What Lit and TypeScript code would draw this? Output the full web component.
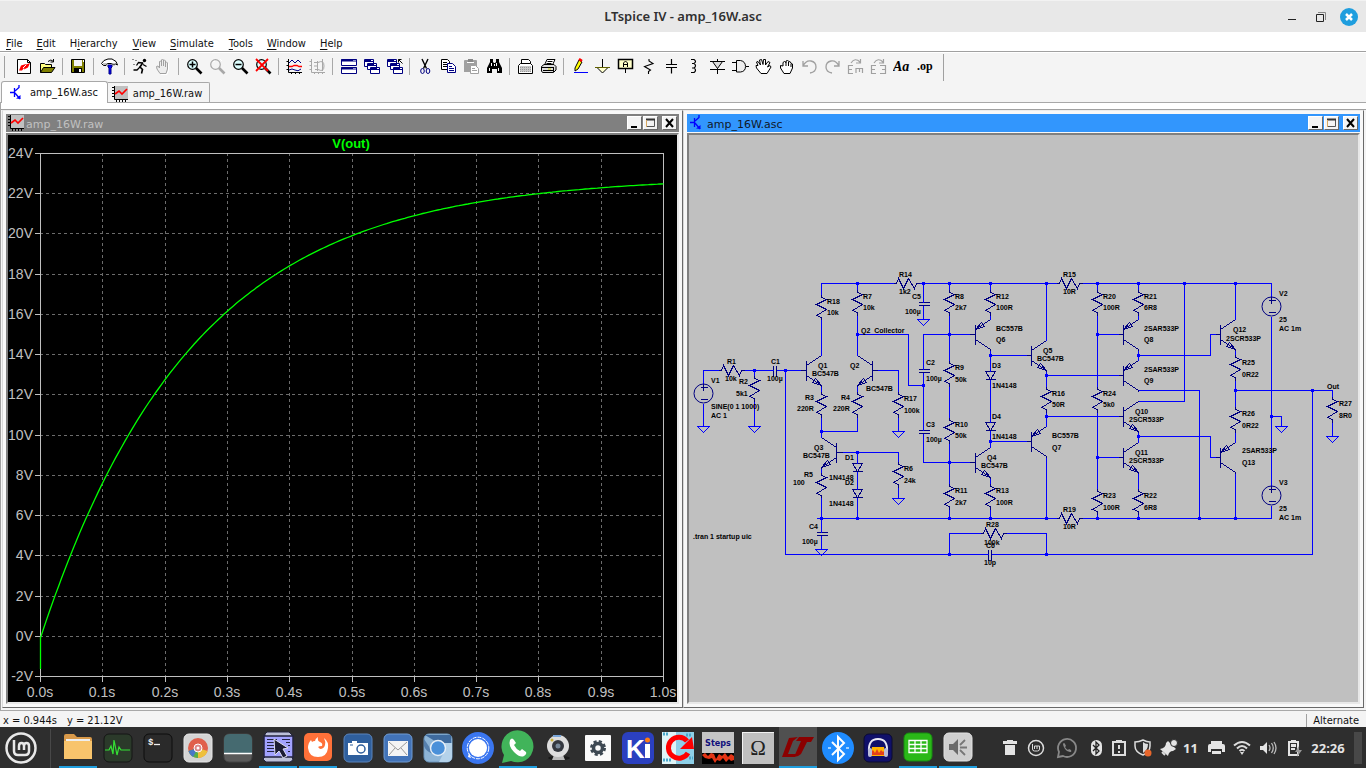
import { LitElement, html, svg, css } from "lit";
import { customElement, state } from "lit/decorators.js";
import { classMap } from "lit/directives/class-map.js";

type Pt = [number, number];

/* ---------- toolbar glyphs, 17 x 17 grid ---------- */
const magnifier = (c: string, glass: string) => svg`
  <circle cx="6.5" cy="6.5" r="4.8" fill=${glass} stroke=${c} stroke-width="1.2"/>
  <path d="M10 10L15.5 15.5" stroke=${c} stroke-width="2.6"/>`;

const windows = svg`
  <path d="M1.5 1.5h9v7h-9z" fill="#fff" stroke="#000080"/><path d="M1 3h10" stroke="#000080" stroke-width="2"/><path d="M8 2.5h2" stroke="#fff"/>
  <path d="M4.5 5.500h9v6h-9z" fill="#fff" stroke="#000080"/><path d="M4 7h10" stroke="#000080" stroke-width="2"/><path d="M11 6.5h2" stroke="#fff"/>
  <path d="M7.5 9.5h9v6h-9z" fill="#fff" stroke="#000080"/><path d="M7 11h10" stroke="#000080" stroke-width="2"/><path d="M14 10.5h2" stroke="#fff"/>`;

const hand = "M5 15.5L2 11L1.5 8.5L3 8L4.5 10V3.5L5.5 3L6.5 4V8V2L7.5 1L8.5 2V8V2.5L9.5 2L10.5 3V9V4.5L11.5 4L12.5 5V11L11 15.5z";

const tools: Record<string, unknown> = {
  new: svg`<path d="M1.5 1.5h10l3 3v11h-13z" fill="#fff" stroke="#000"/><path d="M11.5 1.5v3h3" fill="none" stroke="#000"/>
    <path d="M3 12.5L5 7.5L10 6L8.5 9.5L6 12.5zM9 7L14 5L12 9.5L8 11.5z" fill="#f00"/><path d="M7 10L10 7" stroke="#fff"/>`,
  open: svg`<path d="M1.5 14.500v-9h4l1 1h6v3" fill="#ffff80" stroke="#000"/><path d="M1.5 14.5L4.5 9.5H16L12.5 14.5z" fill="#808000" stroke="#000"/>
    <path d="M9 3.500q3-3 5.500 0M14.5 1v3h-3" fill="none" stroke="#000"/>`,
  save: svg`<path d="M1.5 1.5h13v13h-13z" fill="#808000" stroke="#000"/><path d="M4 2h8v6H4z" fill="#f4f4f4"/><path d="M4 10h8v5H4z" fill="#000"/><path d="M9 11h2v3H9z" fill="#fff"/><path d="M13 2h1v2h-1z" fill="#fff"/>`,
  hammer: svg`<path d="M.5 5.5L3 2.5L7 1H11L15 3.5L16.5 7L14.5 6L13 7L10.5 5.5H6.5L5 7.5H2.5z" fill="#fff" stroke="#000"/><path d="M2 6h4M12 6h3" stroke="#808080"/>
    <path d="M7 7h4v2l-1 1v6H8v-6L7 9z" fill="#00f" stroke="#000080"/>`,
  run: svg`<circle cx="12.5" cy="2.5" r="1.7"/><path d="M11 4.5L8 9L10.5 11.5L9.5 15.5" fill="none" stroke="#000" stroke-width="1.600"/><path d="M10.5 5L6.5 4.5L4.5 7.5M11 6.5L14.5 8.5M8 9L5 12L1.5 12" fill="none" stroke="#000" stroke-width="1.3"/>
    <path d="M0 1.500h2M3 2.500h2M1 6.500h2" stroke="#888"/>`,
  halt: svg`<path d=${hand} transform="translate(1 1)" fill="none" stroke="#fff"/><path d=${hand} fill="#ededed" stroke="#a0a0a0"/>`,
  zoomin: svg`${magnifier("#000", "#dff")}<path d="M3.500 6.500h6M6.500 3.500v6" stroke="#000" stroke-width="1.500"/>`,
  pan: svg`${magnifier("#a8a8a8", "#f4f4f4")}<path d="M4 4l2-1M11 1l2 2" stroke="#fff"/>`,
  zoomout: svg`${magnifier("#000", "#dff")}<path d="M3.500 6.500h6" stroke="#000" stroke-width="1.500"/>`,
  fit: svg`${magnifier("#000", "#dff")}<path d="M1 1L13 13M13 1L1 13" stroke="#f00" stroke-width="1.800"/>`,
  plot: svg`<path d="M2.500 1v13.500H16M.5 3.500h2M.5 7.500h2M.5 11.500h2M5.500 14v2M9.500 14v2M13.500 14v2" fill="none" stroke="#000"/>
    <path d="M3 5L6 2L9 5L12 2L15 5" fill="none" stroke="#000080"/><path d="M3 8.500h3l2-1h3l2 1h3" fill="none" stroke="#f00" stroke-width="1.300"/><path d="M3 12q3-2 6 0t6-1" fill="none" stroke="#000080"/>`,
  spice: svg`<path d="M2.500 1v13.500H16M.5 3.500h2M.5 7.500h2M.5 11.500h2M5.500 14v2M9.500 14v2M13.500 14v2" fill="none" stroke="#a8a8a8"/><path d="M5 4.500h4q6-3 6 3.500t-6 3.500H6M5 8h3M8.500 3v10M13.500 1v12" fill="none" stroke="#a8a8a8"/>`,
  tile: svg`<path d="M1.500 1.500h15v6h-15zM1.500 9.500h15v6h-15z" fill="#fff" stroke="#000080"/><path d="M1 2.500h16M1 10.500h16" stroke="#000080" stroke-width="2"/><path d="M13 2.500h3M13 10.500h3" stroke="#9090d0"/>`,
  cascade: windows,
  closeall: svg`${windows}<path d="M12.500 1.500l4 4M12.500 4.500v-3h3" fill="none" stroke="#000"/>`,
  cut: svg`<path d="M5 1L9.500 10.500M11 1L6.500 10.500" stroke="#000" stroke-width="1.400"/><ellipse cx="5.500" cy="13" rx="1.800" ry="2.500" fill="none" stroke="#000080"/><ellipse cx="11" cy="13" rx="1.800" ry="2.500" fill="none" stroke="#000080"/>`,
  copy: svg`<path d="M1.500 1.500h6l2 2v8h-8z" fill="#fff" stroke="#000"/><path d="M3 4.500h4M3 6.500h4M3 8.500h4" stroke="#000"/><path d="M7.500 5.500h5l3 3v6h-8z" fill="#fff" stroke="#000080"/><path d="M9 8.500h3M9 10.500h5M9 12.500h5" stroke="#000080"/>`,
  paste: svg`<path d="M1 3q0-1 1-1h11q1 0 1 1v11H1z" fill="#a0a0a0"/><path d="M5 1h5v3H5z" fill="#888"/><path d="M4 4.500h7" stroke="#fff"/><path d="M7.500 7.500h5l3 3v5h-8z" fill="#fff" stroke="#a0a0a0"/><path d="M9 10.500h3M9 12.500h5" stroke="#a0a0a0"/>`,
  find: svg`<path d="M4 1h3v3l1 1h1l1-1V1h3v3l3 6v5h-5v-4H6v4H1v-5l3-6z"/><path d="M5.500 5v3M3.500 10v3M10.500 5v3M12.500 10v3M8.500 6v2" stroke="#fff"/>`,
  setup: svg`<path d="M4.500 6.500v-5h7l2 2v3" fill="#fff" stroke="#000"/><path d="M1.500 7.500l2-2h10l2 2v8h-14z" fill="#fff" stroke="#000"/><path d="M3 8h11v6H3z" fill="#c8c8c8"/><path d="M3 9.500h11M3 11.500h11M3 13.500h11" stroke="#999" stroke-dasharray="1 1"/>`,
  print: svg`<path d="M4.500 7L7 1.500h8L12.500 7z" fill="#fff" stroke="#000"/><path d="M7.500 3.500h5M6.500 5.500h5" stroke="#000"/><path d="M1.500 8.500L4 6.500h10l2 2V12L13.500 14.500H2.500L1.500 13z" fill="#ddd" stroke="#000"/><path d="M2 9.500h11M3 12.500h10M13.500 9v5" stroke="#000"/><path d="M8 11h3" stroke="#cc0"/>`,
  wire: svg`<path d="M4 10L8 2L11 4L7 11L4 13z" fill="#ff0" stroke="#000"/><path d="M8 1l3 2" stroke="#f00" stroke-width="2.500"/><path d="M3 14.500h14" stroke="#00f"/>`,
  ground: svg`<path d="M8.500 1v8" stroke="#000"/><path d="M3 9.500h11L8.500 15z" fill="#ffffd0" stroke="#000"/><path d="M1 9.500h15" stroke="#606000"/>`,
  label: svg`<path d="M1.500 1.500h14v9h-14z" fill="#ffffc8" stroke="#000" stroke-width="1.500"/><path d="M6.500 9V5l2-2l2 2v4M6.500 6.500h4" fill="none" stroke="#000"/><path d="M8.500 11v4" stroke="#000"/>`,
  res: svg`<path d="M9 1v2L13 5.500L4.500 8.500L10.500 12L8.500 13.500V16" fill="none" stroke="#000" stroke-width="1.100"/>`,
  cap: svg`<path d="M8.500 1v5.500M8.500 9.500v6M3 6.500h11M3 9.500h11" stroke="#000" stroke-width="1.200"/>`,
  ind: svg`<path d="M5 1.500h3q3 2 0 4H6h2q3 2 0 4.500H6h2q3 2 0 4.500H5" fill="none" stroke="#000" stroke-width="1.200"/>`,
  dio: svg`<path d="M8.500 1v15M1 3.500h15M1 11.500h15" stroke="#000"/><path d="M3.500 3.500L8.500 10.500L13.500 3.500z" fill="#ddd" stroke="#000"/>`,
  gate: svg`<path d="M4.500 2.500h4q5 1 5 6t-5 5.500h-4z" fill="#eee" stroke="#000"/><path d="M0 4.500h4M0 12.500h4M14 8.500h3" stroke="#000"/>`,
  move: svg`<path d="M6 15.500L1.500 10L1 7.500H3L1.500 4L3 3.500L5.500 7L4.500 2L6.500 1.500L8 6.500L8.500 1.500L10.500 1.500L10.500 7L13 3.500L15 4.500L12.500 9L15 7.500L16 9L12 15.500z" fill="#fff" stroke="#000"/>`,
  drag: svg`<path d="M6 15.500L2.500 10V7.500L5 8V4.500L6.500 3.500L8 4.500V3L9.500 2.500L11 3.500L12.500 4L13 5.500L14.500 6V10L12 15.500z" fill="#fff" stroke="#000"/><path d="M8 4v4M10.500 4v4M13 6v3" stroke="#000"/>`,
  undo: svg`<path d="M2 3v5h5M2 8q3-6 8-5t5 6t-6 6" fill="none" stroke="#a0a0a0" stroke-width="1.300"/>`,
  redo: svg`<path d="M15 3v5h-5M15 8q-3-6-8-5t-5 6t6 6" fill="none" stroke="#a0a0a0" stroke-width="1.300"/>`,
  rotate: svg`<path d="M4 5q4-6 9-1M13.500 1v4H9M6 7.500H1.500v8H6M2 11.500h3M9 10v5M9 10.500h7M12.500 10v4M15.500 10v5" fill="none" stroke="#a0a0a0" stroke-width="1.200"/>`,
  mirror: svg`<path d="M4 5q4-6 9-1M13.500 1v4H9M6 7.500H1.500v8H6M2 11.500h3M10 7.500h5.500v8H10M12 11.500h3" fill="none" stroke="#a0a0a0" stroke-width="1.200"/>`,
};

const toolGroups: string[][] = [
  ["new", "open"], ["save"], ["hammer"], ["run", "halt"],
  ["zoomin", "pan", "zoomout", "fit"], ["plot", "spice"],
  ["tile", "cascade", "closeall"], ["cut", "copy", "paste", "find"],
  ["setup", "print"],
  ["wire", "ground", "label", "res", "cap", "ind", "dio", "gate", "move", "drag", "undo", "redo", "rotate", "mirror", "text", "op"],
];

const transistorIcon = html`<svg class="doc" viewBox="0 0 16 16"><path d="M1 7.500h4M5.500 3v9M6 6L10 2.500V0M6 8L11 14" fill="none" stroke="#00f" stroke-width="1.300"/><path d="M7 13.500l4.500.5V10z" fill="#00f"/></svg>`;
const waveIcon = html`<svg class="doc" viewBox="0 0 16 16"><path d="M3 0h13v13H3z" fill="#c0c0c0"/><path d="M2.500 0v13.500H16M0 1.500h2M0 4.500h2M0 7.500h2M0 10.500h2M4.500 14v2M7.500 14v2M10.500 14v2M13.500 14v2" fill="none" stroke="#000"/><path d="M3 8L7 5L10 8L15 3" fill="none" stroke="#f00" stroke-width="1.700"/></svg>`;

/* ---------- panel icons, 40 x 41 grid ---------- */
const tile = (fill: string, stroke = "#1c1c1c") =>
  svg`<rect x="6" y="6" width="28" height="28" rx="5" fill=${fill} stroke=${stroke}/>`;

interface App { name: string; open?: boolean; active?: boolean; art: unknown }
const apps: App[] = [
  { name: "Files", open: true, art: svg`<path d="M6 9q0-2 2-2h8l3 3h13q2 0 2 2v4H6z" fill="#d99a4a"/><path d="M8 12h24v6H8z" fill="#eee"/><path d="M6 14h28v18H6z" fill="#f8c46c"/>` },
  { name: "System monitor", art: svg`${tile("#2b3a2a", "#151515")}<path d="M7 22h4l2-4l2 8l1-14l3 15l2-8l2 3h9" fill="none" stroke="#35e035" stroke-width="1.200"/>` },
  { name: "Terminal", art: svg`${tile("#2a2a2a", "#0c0c0c")}<text x="10" y="17" class="mono">$</text><path d="M16 16.500h6" stroke="#eee" stroke-width="1.300"/>` },
  { name: "Disk usage", art: svg`${tile("#d4d4d4", "#e8e8e8")}<circle cx="20" cy="20" r="10" fill="#e0604c"/><path d="M20 20L10.500 23A10 10 0 0 0 20 30z" fill="#58b04a"/><path d="M20 20V30A10 10 0 0 0 29.500 23z" fill="#eec03c"/><path d="M20 20L10.500 23A10 10 0 0 0 15 29z" fill="#4a78c8"/><circle cx="20" cy="20" r="4" fill="#d88" stroke="#fff"/><circle cx="20" cy="20" r="1.500" fill="#fff"/>` },
  { name: "Screenshot strip", art: svg`${tile("#5a5a5a", "#444")}<path d="M6 12q0-6 6-6h16q6 0 6 6v13H6z" fill="#456a70"/><path d="M6 25.500h28" stroke="#fff" stroke-width="1.500"/>` },
  { name: "Screen notes", open: true, art: svg`<path d="M7 9V7l2-2h22l3 3v22l1 3l-3 2H8l-3-3l2-2z" fill="#bcc0d8" stroke="#23233f"/><path d="M6 9h29v21H6z" fill="#a2a2ff" stroke="#23233f" stroke-width="1.500"/><path d="M9 12.500h10M9 15.500h7M9 18.500h8M9 21.500h7M9 24.500h8M24 12.500h8M28 15.500h4M30 18.500h2M30 24.500h2" stroke="#23233f"/><path d="M16 12l14 9l-5 1l4 7l-4 2l-4-7l-4 4z" fill="#1c1c34" stroke="#dde"/>` },
  { name: "Firefox", open: true, art: svg`<rect x="6" y="6" width="28" height="28" rx="5" fill="#ff7139"/><path d="M20 30q-9 0-10-9q0-5 3-8l1 2q1-1 3-1q0-2 3-4q-1 4 2 5q3 1 2 4q-3 0-4 1l2 2q4 0 5-4q1-3-1-7q5 4 4 10q-1 9-10 9z" fill="#fff"/>` },
  { name: "Camera", art: svg`${tile("#2f5f9d", "#5b84bb")}<path d="M10 15h4v-2h5v2h11v12H10z" fill="#fff"/><circle cx="23" cy="21" r="4" fill="#fff" stroke="#2f5f9d" stroke-width="1.500"/><path d="M12 17h3" stroke="#2f5f9d"/>` },
  { name: "Mail", art: svg`${tile("#4273b8", "#6f9bd2")}<path d="M10 13h20v15H10z" fill="#f4f4f4"/><path d="M11 14l9 8l9-8M11 27l6-7M29 27l-6-7" fill="none" stroke="#999"/>` },
  { name: "Chromium", art: svg`${tile("#8db4d6", "#6c97bf")}<path d="M6 11l10 15q-8-2-10-8z" fill="#5680ae"/><path d="M7 7h26v8H20z" fill="#3f6b9e"/><path d="M26 24l-5 10h9q4-1 4-5V15h-8z" fill="#b4d2ea"/><circle cx="20" cy="20" r="7.500" fill="#4a90d9" stroke="#e6eef6" stroke-width="1.500"/>` },
  { name: "Signal", art: svg`<circle cx="20" cy="20" r="16" fill="#3a76f0"/><circle cx="20" cy="20" r="9" fill="#fff"/><path d="M13 30l-3-1l1-4z" fill="#fff"/><circle cx="20" cy="20" r="10.800" fill="none" stroke="#fff" stroke-dasharray="4 1"/>` },
  { name: "WhatsApp", open: true, art: svg`<path d="M4 36L6 28A16 16 0 1 1 13 34z" fill="#41b45a"/><path d="M12 13q2-3 4 0l2 3l-2 2q2 4 6 6l2-2l4 3q1 2-2 4q-4 2-10-4t-4-12z" fill="#fff"/>` },
  { name: "Webcam", art: svg`<ellipse cx="21" cy="30" rx="11" ry="2" fill="#1a1a1a"/><path d="M16 27h9l2 5H14z" fill="#bbb"/><circle cx="20" cy="18" r="11" fill="#dedede"/><path d="M15 7h8v2h-8z" fill="#7aa6d8"/><circle cx="20" cy="18" r="6" fill="#34383f"/><circle cx="20" cy="18" r="2.500" fill="#789"/><circle cx="14" cy="12" r="1.500" fill="#c9b23c"/>` },
  { name: "Settings", art: svg`<rect x="7" y="7" width="26" height="26" rx="1" fill="#fafafa"/><circle cx="20" cy="20" r="6.500" fill="none" stroke="#3d4852" stroke-width="3" stroke-dasharray="3 2.100"/><circle cx="20" cy="20" r="4.500" fill="none" stroke="#3d4852" stroke-width="3.500"/>` },
  { name: "KiCad", art: svg`<rect x="4" y="4" width="32" height="32" rx="6" fill="#2b40c0"/><text x="8" y="30" class="ki">K</text><path d="M27 16h5v14h-5z" fill="#fff"/><circle cx="29.500" cy="12" r="2.500" fill="#ff7a10"/>` },
  { name: "Cirkuit", art: svg`<path d="M4 4h32v32H4z" fill="#dff4f7"/><path d="M18 4h18v32H18z" fill="#8ed0e8"/><path d="M5 6h6M5 32h8M28 7h6M31 30h4" stroke="#4aa8cc" stroke-width="3" stroke-dasharray="2 1"/><path d="M29 13a10.500 10.500 0 1 0 1 12" fill="none" stroke="#f00" stroke-width="5"/><path d="M22 21h14l-2-12z" fill="#f00"/>` },
  { name: "Steps", art: svg`<path d="M4 4h32v32H4z" fill="#c4c4c4"/><path d="M4 25h32v11H4z" fill="#000"/><path d="M4 27l3-2l3 3l3-3l3 1l2 5l3-5l3 2l3-3l3 4l3-3l3 2v4l-3 1l-2-2l-3 3l-3-4l-3 3l-3-1l-2 3l-3-5l-3 1l-4-1z" fill="#e33415"/><text x="20" y="18" text-anchor="middle" class="steps">Steps</text>` },
  { name: "Resistance", art: svg`<path d="M4 4h32v32H4z" fill="#f2f2f2"/><path d="M5 5h31v31H5z" fill="#c0c0c0"/><text x="20" y="27" text-anchor="middle" class="ohm">Ω</text>` },
  { name: "LTspice", open: true, active: true, art: svg`<path d="M4 30L11 11L20 10L15 14L10 27H19L17 30zM21 10H36L33 15H29L23 27Q20 30 16 30L23 14H18z" fill="#8b0000"/>` },
  { name: "Bluetooth", art: svg`<circle cx="20" cy="20" r="16" fill="#1f8cff"/><path d="M14 14l12 12l-6 6V9l6 6L14 27" fill="none" stroke="#fff" stroke-width="2"/><path d="M10 20h3M28 20h3" stroke="#9fd0ff" stroke-width="2"/>` },
  { name: "Audacity", art: svg`${tile("#10106a", "#0a0a30")}<path d="M14 19h12l1 9H13z" fill="#ffb400"/><path d="M13 24l2-2l2 3l2-4l2 4l2-3l2 2l2-2v5H13z" fill="#e3401a"/><path d="M11 24q-1-13 9-13t9 13" fill="none" stroke="#e8e8f4" stroke-width="2"/><rect x="10" y="20" width="4" height="9" rx="2" fill="#b9bdd8"/><rect x="26" y="20" width="4" height="9" rx="2" fill="#b9bdd8"/>` },
  { name: "Spreadsheet", open: true, art: svg`${tile("#2ab818", "#178a10")}<path d="M11 13.500h18v12H11zM11 17.500h18M11 21.500h18M17 13v13M23 13v13" fill="none" stroke="#fff" stroke-width="1.300"/>` },
  { name: "Volume control", open: true, art: svg`${tile("#cfcfcf", "#e2e2e2")}<path d="M11 17h4l5-5v16l-5-5h-4z" fill="#6a6a6a"/><path d="M22 18l5-5M22 20.500h7M22 23l5 5" stroke="#777" stroke-width="1.800"/>` },
];

const trayLeft: { name: string; cls: string; art: unknown }[] = [
  { name: "Trash", cls: "", art: svg`<path d="M5 5h14v3H5zM9 4h6v2H9zM7 9h10v10H7z" fill="#e4e4e4"/>` },
  { name: "Update manager", cls: "", art: svg`<circle cx="12" cy="12" r="7.500" fill="none" stroke="#ddd" stroke-width="1.500"/><path d="M8.500 8v5q0 2 2 2h3q2 0 2-2v-3h-5v3M13 10v3" fill="none" stroke="#ddd"/>` },
  { name: "WhatsApp", cls: "wide", art: svg`<path d="M3 21l1-5A9 9 0 1 1 8 20z" fill="none" stroke="#888" stroke-width="1.800"/><path d="M8 8q1-2 2 0l1 2l-1 1q1 2 3 3l1-1l2 1q1 2-1 2q-3 0-5-3t-2-5z" fill="#888"/>` },
  { name: "Bluetooth", cls: "slim", art: svg`<rect x="6" y="4" width="11" height="16" rx="5.500" fill="#e4e4e4"/><path d="M8 9l6 6l-3 3V6l3 3l-6 6" fill="none" stroke="#222" stroke-width="1.300"/>` },
  { name: "Clipboard", cls: "tight", art: svg`<path d="M6 6h12v13H6z" fill="none" stroke="#ddd" stroke-width="2"/><path d="M9 4h6v3H9z" fill="#ddd"/><path d="M12 9v4M12 15v2" stroke="#ddd" stroke-width="2"/>` },
  { name: "Shield", cls: "tight", art: svg`<path d="M4 6q4 0 8-2q4 2 7 2v4q0 6-7 9q-8-3-8-9z" fill="none" stroke="#ddd" stroke-width="1.500"/><path d="M12 6v11q5-3 5-9q-3 0-5-2z" fill="#ddd"/><circle cx="17" cy="17" r="3.500" fill="#e8672c"/>` },
  { name: "Notifications", cls: "", art: svg`<path d="M4 13Q10 12 10 7L12 5L20 13L17 15Q13 15 12 20z" fill="#e4e4e4"/><circle cx="18" cy="7" r="3.500" fill="#e4e4e4" stroke="#2e2e2e"/><path d="M6 16l3 3" stroke="#ddd" stroke-width="2"/>` },
];
const trayRight: { name: string; art: unknown }[] = [
  { name: "Printer", art: svg`<path d="M7 5h11v3H7zM4 10q0-2 2-2h13q2 0 2 2v6h-3v-3H7v3H4z" fill="#e4e4e4"/><path d="M8 15h9v3H8z" fill="#e4e4e4"/>` },
  { name: "Wireless", art: svg`<path d="M4 9.500q8-7 16 0M7 12.500q5-5 10 0M9.500 15q2.500-2.500 5 0" fill="none" stroke="#ddd" stroke-width="2"/><path d="M10 16h4l-2 3z" fill="#ddd"/>` },
  { name: "Volume", art: svg`<path d="M4 10h3l4-4v12l-4-4H4z" fill="#e4e4e4"/><path d="M13 9q2 3 0 6M15.500 7q3.500 5 0 10M18 6q4 6 0 12" fill="none" stroke="#bbb" stroke-width="1.300"/>` },
  { name: "Battery", art: svg`<path d="M7 6h9v13H7z" fill="none" stroke="#e4e4e4" stroke-width="2"/><path d="M9 4h5v2H9zM9 8h5v3H9zM9 12h4v2H9z" fill="#e4e4e4"/><path d="M17 10l-4 6h3l-1 5l5-7h-3z" fill="#999"/>` },
];

/* ---------- schematic ---------- */
const UNIT = 0.3205;
const stroke = (x: number, y: number, pts: Pt[]) =>
  "M" + pts.map(([px, py]) => `${x + Math.round(px * UNIT) + 0.5} ${y + Math.round(py * UNIT) + 0.5}`).join("L");
const poly = (pts: Pt[]) => "M" + pts.map(([px, py]) => `${px + 0.5} ${py + 0.5}`).join("L");

const ZIGZAG: Pt[] = [[0, 0], [0, 8], [16, 16], [-16, 32], [16, 48], [-16, 64], [0, 72], [0, 80]];
const resistor = ([x, y]: Pt) => stroke(x, y, ZIGZAG);
const resistorH = ([x, y]: Pt) => stroke(x, y, ZIGZAG.map(([a, b]) => [b, -a] as Pt));

const transistor = (x: number, y: number, side: 1 | -1, pnp: boolean) => {
  const f = pnp ? -1 : 1;
  const at = (pts: Pt[]) => stroke(x, y, pts.map(([a, b]) => [a * side, b * f] as Pt));
  const arrow: Pt[] = pnp
    ? [[-48, 16], [-28, 36], [-20, 24], [-48, 16]]
    : [[0, 48], [-28, 38], [-20, 26], [0, 48]];
  return at([[-64, 0], [-48, 0]]) + at([[-48, -32], [-48, 32]]) +
    at([[0, -50], [0, -48], [-48, -16]]) + at([[-48, 16], [0, 48], [0, 50]]) + at(arrow);
};
const diode = ([x, y]: Pt) =>
  stroke(x, y, [[-17, 0], [17, 0], [0, 24], [-17, 0]]) + stroke(x, y, [[-17, 25], [17, 25]]);
const capV = ([x, y]: Pt) => poly([[x - 5, y], [x + 6, y]]) + poly([[x - 5, y + 3], [x + 6, y + 3]]);
const capH = ([x, y]: Pt) => poly([[x, y - 5], [x, y + 6]]) + poly([[x + 3, y - 5], [x + 3, y + 6]]);
const source = ([x, y]: Pt) =>
  poly([[x - 3, y - 6], [x + 4, y - 6]]) + poly([[x, y - 10], [x, y - 3]]) + poly([[x - 3, y + 6], [x + 4, y + 6]]);
const earth = ([x, y]: Pt) => poly([[x - 6, y], [x + 6, y], [x, y + 6], [x - 6, y]]);

const resistors: Pt[] = [
  [821, 294], [857, 289], [949, 289], [990, 289], [1097, 289], [1138, 289], [949, 360], [949, 417],
  [1046, 386], [1097, 386], [949, 483], [990, 483], [1097, 488], [1138, 488], [1235, 354], [1235, 406],
  [1332, 396], [898, 391], [821, 391], [857, 391], [754, 375], [898, 461], [821, 472],
];
const resistorsH: Pt[] = [[893, 283], [1056, 283], [1056, 518], [980, 533], [718, 370]];
const transistors: [number, number, 1 | -1, boolean][] = [
  [821, 370, 1, false], [857, 370, -1, false], [821, 452, -1, false], [990, 462, 1, false],
  [1046, 355, 1, false], [990, 334, 1, true], [1046, 441, 1, true], [1138, 334, 1, true],
  [1138, 375, 1, true], [1138, 416, 1, false], [1138, 457, 1, false], [1235, 334, 1, false],
  [1235, 457, 1, true],
];
const sources: Pt[] = [[703, 393], [1271, 306], [1271, 495]];
const earths: Pt[] = [[703, 426], [754, 426], [898, 431], [898, 498], [821, 549], [923, 319], [1281, 426], [1332, 436]];

const symbolPath =
  resistors.map(resistor).join("") + resistorsH.map(resistorH).join("") +
  transistors.map((t) => transistor(...t)).join("") + sources.map(source).join("") +
  ([[857, 463], [857, 489], [990, 371], [990, 422]] as Pt[]).map(diode).join("") +
  ([[821, 532], [923, 302], [923, 369], [923, 430]] as Pt[]).map(capV).join("") +
  ([[773, 370], [988, 554]] as Pt[]).map(capH).join("");

const wires: Pt[][] = [
  [[703, 383], [703, 370], [718, 370]], [[703, 403], [703, 426]], [[744, 370], [773, 370]], [[776, 370], [800, 370]],
  [[754, 370], [754, 375]], [[754, 401], [754, 426]],
  [[785, 370], [785, 554], [988, 554]], [[991, 554], [1312, 554], [1312, 390]],
  [[893, 283], [821, 283], [821, 294]], [[821, 319], [821, 355]], [[821, 386], [821, 391]], [[821, 417], [821, 437]],
  [[857, 283], [857, 289]], [[857, 315], [857, 355]], [[857, 386], [857, 391]], [[857, 417], [857, 431], [821, 431]],
  [[857, 334], [908, 334], [908, 385], [923, 385]], [[877, 370], [898, 370], [898, 391]], [[898, 417], [898, 431]],
  [[821, 468], [821, 472]], [[821, 497], [821, 532]], [[821, 535], [821, 549]],
  [[842, 452], [898, 452], [898, 461]], [[898, 487], [898, 498]],
  [[857, 452], [857, 463]], [[857, 471], [857, 489]], [[857, 497], [857, 518]],
  [[816, 518], [1056, 518]], [[1082, 518], [1271, 518], [1271, 505]],
  [[919, 283], [1056, 283]], [[1082, 283], [1271, 283], [1271, 296]], [[1271, 316], [1271, 485]],
  [[923, 283], [923, 302]], [[923, 305], [923, 319]],
  [[969, 334], [923, 334], [923, 369]], [[923, 372], [923, 430]], [[923, 433], [923, 462], [969, 462]],
  [[949, 283], [949, 289]], [[949, 315], [949, 360]], [[949, 386], [949, 417]], [[949, 443], [949, 483]], [[949, 509], [949, 518]],
  [[990, 283], [990, 289]], [[990, 315], [990, 319]], [[990, 350], [990, 371]], [[990, 379], [990, 422]], [[990, 430], [990, 447]],
  [[990, 478], [990, 483]], [[990, 509], [990, 518]], [[990, 355], [1026, 355]], [[990, 441], [1026, 441]],
  [[1046, 283], [1046, 340]], [[1046, 371], [1046, 386]], [[1046, 412], [1046, 426]], [[1046, 457], [1046, 518]],
  [[1046, 375], [1118, 375]], [[1046, 416], [1118, 416]],
  [[1097, 283], [1097, 289]], [[1097, 315], [1097, 386]], [[1097, 412], [1097, 488]], [[1097, 514], [1097, 518]],
  [[1097, 334], [1118, 334]], [[1097, 457], [1118, 457]],
  [[1138, 283], [1138, 289]], [[1138, 315], [1138, 319]], [[1138, 350], [1138, 360]], [[1138, 432], [1138, 442]],
  [[1138, 473], [1138, 488]], [[1138, 514], [1138, 518]],
  [[1138, 390], [1199, 390], [1199, 518]], [[1138, 401], [1184, 401], [1184, 283]],
  [[1138, 355], [1210, 355], [1210, 334], [1215, 334]], [[1138, 436], [1210, 436], [1210, 457], [1215, 457]],
  [[1235, 283], [1235, 319]], [[1235, 350], [1235, 354]], [[1235, 380], [1235, 406]], [[1235, 432], [1235, 442]], [[1235, 473], [1235, 518]],
  [[1235, 390], [1332, 390], [1332, 396]], [[1332, 422], [1332, 436]], [[1271, 416], [1281, 416], [1281, 426]],
  [[949, 554], [949, 533], [980, 533]], [[1006, 533], [1046, 533], [1046, 554]],
];
const wirePath = wires.map(poly).join("") + earths.map(earth).join("");

const nodes: Pt[] = [
  [754, 370], [785, 370], [857, 283], [923, 283], [949, 283], [990, 283], [1046, 283], [1097, 283], [1138, 283],
  [1184, 283], [1235, 283], [857, 334], [923, 385], [949, 334], [821, 431], [857, 452], [821, 518], [857, 518],
  [949, 518], [990, 518], [1046, 518], [1097, 518], [1138, 518], [1199, 518], [1235, 518], [949, 462], [990, 355],
  [990, 441], [1046, 375], [1046, 416], [1097, 334], [1097, 457], [1138, 355], [1138, 436], [1235, 390],
  [1312, 390], [1271, 416], [949, 554], [1046, 554],
];

const labels: [number, number, string][] = [
  [827, 304, "R18"], [827, 315, "10k"], [863, 299, "R7"], [863, 310, "10k"], [899, 277, "R14"], [899, 294, "1k2"],
  [912, 299, "C5"], [905, 314, "100µ"], [861, 333, "Q2\u00a0\u00a0Collector"], [727, 364, "R1"], [725, 381, "10k"],
  [771, 364, "C1"], [767, 381, "100µ"], [711, 383, "V1"], [739, 384, "R2"], [736, 396, "5k1"],
  [711, 409, "SINE(0 1 1000)"], [711, 418, "AC 1"], [818, 368, "Q1"], [812, 376, "BC547B"], [850, 368, "Q2"],
  [866, 391, "BC547B"], [805, 400, "R3"], [797, 411, "220R"], [841, 400, "R4"], [833, 411, "220R"],
  [904, 401, "R17"], [904, 413, "100k"], [955, 299, "R8"], [955, 310, "2k7"], [996, 299, "R12"], [996, 310, "100R"],
  [996, 331, "BC557B"], [996, 342, "Q6"], [955, 370, "R9"], [955, 382, "50k"], [926, 365, "C2"], [926, 381, "100µ"],
  [1043, 353, "Q5"], [1037, 361, "BC547B"], [992, 368, "D3"], [992, 388, "1N4148"], [1052, 396, "R16"], [1052, 407, "50R"],
  [1103, 396, "R24"], [1103, 407, "5k0"], [992, 419, "D4"], [992, 439, "1N4148"], [926, 427, "C3"], [926, 442, "100µ"],
  [955, 427, "R10"], [955, 438, "50k"], [1135, 414, "Q10"], [1129, 422, "2SCR533P"], [1063, 277, "R15"], [1063, 294, "10R"],
  [1103, 299, "R20"], [1103, 310, "100R"], [1144, 299, "R21"], [1144, 310, "6R8"], [1144, 331, "2SAR533P"], [1144, 342, "Q8"],
  [1144, 372, "2SAR533P"], [1144, 383, "Q9"], [1233, 332, "Q12"], [1226, 341, "2SCR533P"], [1279, 296, "V2"],
  [1279, 322, "25"], [1279, 331, "AC 1m"], [1242, 365, "R25"], [1242, 377, "0R22"], [1242, 416, "R26"], [1242, 428, "0R22"],
  [1327, 389, "Out"], [1339, 406, "R27"], [1339, 418, "8R0"], [814, 450, "Q3"], [803, 458, "BC547B"], [845, 460, "D1"],
  [829, 480, "1N4148"], [845, 485, "D2"], [829, 506, "1N4148"], [804, 477, "R5"], [793, 485, "100"], [904, 471, "R6"],
  [904, 483, "24k"], [809, 529, "C4"], [802, 544, "100µ"], [693, 539, ".tran 1 startup uic"], [987, 460, "Q4"],
  [981, 468, "BC547B"], [955, 493, "R11"], [955, 505, "2k7"], [996, 493, "R13"], [996, 505, "100R"], [1052, 438, "BC557B"],
  [1052, 450, "Q7"], [1103, 498, "R23"], [1103, 510, "100R"], [1063, 512, "R19"], [1063, 529, "10R"], [986, 527, "R28"],
  [984, 545, "100k"], [986, 548, "C6"], [984, 565, "10p"], [1135, 455, "Q11"], [1129, 463, "2SCR533P"], [1144, 498, "R22"],
  [1144, 510, "6R8"], [1242, 453, "2SAR533P"], [1242, 465, "Q13"], [1279, 485, "V3"], [1279, 511, "25"], [1279, 520, "AC 1m"],
];

/* ---------- waveform ---------- */
const X0 = 40, X1 = 663, Y0 = 153, Y1 = 676;
const volts = Array.from({ length: 14 }, (_, i) => 24 - 2 * i);
const times = Array.from({ length: 11 }, (_, i) => i / 10);
const px = (t: number) => Math.round(X0 + t * (X1 - X0)) + 0.5;
const py = (v: number) => Math.round(Y0 + ((24 - v) / 26) * (Y1 - Y0)) + 0.5;
const trace = `M40.5 669V637L` + Array.from({ length: 208 }, (_, i) => {
  const t = i / 207;
  const v = 22.95 * (1 - Math.exp(-4.1 * t)) - 0.08;
  return `${(X0 + 0.5 + t * (X1 - X0)).toFixed(1)} ${(Y0 + ((24 - v) / 26) * (Y1 - Y0) + 0.5).toFixed(1)}`;
}).join("L");

@customElement("app-root")
export class AppRoot extends LitElement {
  @state() private tab = "amp_16W.asc";

  static styles = css`
    :host { display: flex; flex-direction: column; height: 100vh; background: #f4f4f4; color: #111;
      font: 11px/14px "DejaVu Sans Condensed", "DejaVu Sans", sans-serif; overflow: hidden; }
    * { box-sizing: border-box; }
    button { font: inherit; color: inherit; background: none; border: 0; padding: 0; margin: 0; display: block; }
    svg { display: block; }
    .head { height: 32px; flex: none; display: grid; grid-template-columns: 1fr auto 1fr; align-items: center;
      background: #e8e8e8; border-top: 1px solid #f2f2f2; }
    .head h1 { grid-column: 2; margin: 0; padding-bottom: 2px; font: 600 13px/20px "Noto Sans", sans-serif; color: #303030; }
    .wm { display: flex; justify-content: flex-end; gap: 8px; padding-right: 7px; }
    .menu { height: 20px; flex: none; display: flex; align-items: center; gap: 14px; padding: 4px 0 0 6px;
      background: #fff; border-bottom: 1px solid #a0a0a0; }
    .menu u { text-underline-offset: 2px; }
    .menu .gapped { margin-right: 1px; }
    .tools { height: 29px; flex: none; display: flex; align-items: flex-start; padding: 1px 0 0 4px;
      border-top: 1px solid #fff; }
    .grip { width: 1px; height: 22px; margin: 2px 8px 0 0; background: #a0a0a0; }
    .group { display: flex; padding-top: 4px; }
    .group + .group::before { content: ""; width: 1px; height: 17px; margin: 0 4px 0 3px; background: #a8a8a8; }
    .tool { width: 23px; height: 17px; padding-left: 3px; }
    .tool svg { width: 17px; height: 17px; }
    .tool text { font: italic bold 14px "Liberation Serif", serif; }
    .tool .op { font: bold 12px "Liberation Serif", serif; }
    .end { width: 1px; height: 27px; margin-left: 7px; background: #a0a0a0; }
    .tabs { height: 22px; flex: none; display: flex; align-items: flex-end; padding-left: 1px;
      border-bottom: 1px solid #a8a8a8; }
    .tab { display: flex; align-items: center; gap: 5px; height: 20px; padding: 2px 7px 0 4px;
      border: 1px solid #a8a8a8; border-bottom: 0; border-left: 0; border-radius: 0 2px 0 0; }
    .tab.on { height: 22px; margin-bottom: -1px; padding: 0 9px 0 7px;
      background: #fff; border-left: 1px solid #a8a8a8; border-radius: 3px 3px 0 0; }
    .doc { width: 16px; height: 16px; flex: none; }
    .strip { height: 7px; flex: none; background: #fff; border-bottom: 1px solid #a0a0a0; border-left: 1px solid #a8a8a8; }
    .mdi { flex: 1; min-height: 0; display: flex; padding: 0 2px 2px 1px; border-left: 1px solid #a0a0a0; }
    .win { flex: 1; min-width: 0; display: flex; flex-direction: column; padding: 3px; background: #f8f8f8;
      border: 1px solid; border-color: #ececec #696969 #696969 #d8d8d8; }
    .cap { height: 18px; flex: none; display: flex; align-items: center; gap: 1px; padding: 0 2px 0 2px;
      background: #808080; color: #c0c0c0; font: 11px/18px "DejaVu Sans", sans-serif; }
    .cap.on { background: #3296fd; color: #101828; }
    .cap h2 { flex: 1; margin: 0; padding: 3px 0 0 1px; font: inherit; }
    .cap button { width: 15px; height: 14px; background: #f4f4f4; border: 1px solid; border-color: #fff #696969 #696969 #fff; }
    .cap .shut { margin-left: 3px; }
    .cap button svg { width: 13px; height: 12px; }
    .view { flex: 1; min-height: 0; margin-top: 1px; border: 2px solid; border-color: #808080 #e8e8e8 #e8e8e8 #808080; }
    .view svg { width: 100%; height: 100%; }
    .dark { background: #000; }
    .grey { background: #c0c0c0; }
    .axis { font: 14px "Liberation Sans", sans-serif; fill: #c0c0c0; }
    .sig { font: bold 13px "Liberation Sans", sans-serif; fill: #0f0; }
    .net { font: bold 7px "Liberation Sans", sans-serif; fill: #000; }
    .status { height: 17px; flex: none; display: flex; align-items: center; padding: 4px 7px 0 3px; border-top: 1px solid #a8a8a8; }
    .status span { margin-right: 10px; }
    .status .right { margin: 0 0 0 auto; padding-left: 6px; border-left: 1px solid #a0a0a0; }
    .bar { height: 41px; flex: none; display: flex; align-items: stretch; background: #2e2e2e; color: #e4e4e4; }
    .start { width: 42px; }
    .rule { width: 1px; margin: 2px 7px 0 8px; background: #484848; }
    .app { width: 38px; height: 41px; margin: 0 1px; }
    .app svg { width: 38px; height: 39px; }
    .app.open { border-bottom: 2px solid #1f9ede; }
    .app.active { background: #505050; }
    .mono { font: bold 9px "Liberation Mono", monospace; fill: #eee; }
    .ki { font: bold 26px "Liberation Sans", sans-serif; fill: #fff; }
    .steps { font: bold 9px "DejaVu Sans Condensed", sans-serif; fill: #10107c; }
    .ohm { font: 21px "Liberation Serif", serif; fill: #222; }
    .tray { margin-left: auto; display: flex; align-items: center; font: bold 13px/18px "Noto Sans", sans-serif; }
    .icon { width: 26px; }
    .icon.wide { width: 36px; }
    .icon.slim { width: 22px; }
    .icon.tight { width: 24px; }
    .tray svg { width: 24px; height: 24px; margin: 0 auto; }
    .count { width: 22px; padding-left: 2px; }
    .clock { width: 42px; text-align: center; }
    .peek { width: 8px; height: 32px; margin: 0 4px 0 5px; background: #484848; }
  `;

  private menuItem(label: string, gapped = false) {
    return html`<button class=${classMap({ gapped })}><u>${label[0]}</u>${label.slice(1)}</button>`;
  }

  private toolIcon(name: string) {
    if (name === "text") return svg`<text x="0" y="13">Aa</text>`;
    if (name === "op") return svg`<text class="op" x="1" y="12">.op</text>`;
    return tools[name];
  }

  private caption(title: string, icon: unknown, on: boolean) {
    return html`<div class=${classMap({ cap: true, on })}>
      ${icon}<h2>${title}</h2>
      <button aria-label="Minimize ${title}"><svg viewBox="0 0 13 12"><path d="M3 9h6v2H3z"/></svg></button>
      <button aria-label="Maximize ${title}"><svg viewBox="0 0 13 12"><path d="M2.500 2.500h8v7h-8z" fill="none" stroke="#555"/><path d="M2 2.500h9" stroke="#333" stroke-width="2"/><path d="M2.500 3v7" stroke="#d9a860"/></svg></button>
      <button class="shut" aria-label="Close ${title}"><svg viewBox="0 0 13 12"><path d="M3 2l7 8M10 2L3 10" stroke="#000" stroke-width="2"/></svg></button>
    </div>`;
  }

  private plot() {
    return html`<svg viewBox="8 135 669 567" role="img" aria-label="V(out)">
      <g shape-rendering="crispEdges" stroke="#6c6c6c" stroke-dasharray="3 3">
        ${volts.slice(1, -1).map((v) => svg`<path d="M${X0} ${py(v)}H${X1}"/>`)}
        ${times.slice(1, -1).map((t) => svg`<path d="M${px(t)} ${Y0}V${Y1}"/>`)}
      </g>
      <g shape-rendering="crispEdges" stroke="#c0c0c0" fill="none">
        <path d="M40.500 153.500H663.500V676.500H40.500z"/>
        ${volts.map((v) => svg`<path d="M35 ${py(v)}H40"/>`)}
        ${times.map((t) => svg`<path d="M${px(t)} 677V682"/>`)}
      </g>
      <path d=${trace} fill="none" stroke="#0f0" stroke-width="1.300"/>
      ${volts.map((v) => svg`<text class="axis" x="33" y=${Math.floor(py(v)) + 5} text-anchor="end">${v}V</text>`)}
      ${times.map((t) => svg`<text class="axis" x=${Math.floor(px(t))} y="697" text-anchor="middle">${t.toFixed(1)}s</text>`)}
      <text class="sig" x="351" y="148" text-anchor="middle">V(out)</text>
    </svg>`;
  }

  private schematic() {
    return html`<svg viewBox="689 135 669 567" role="img" aria-label="16 W amplifier schematic">
      <g shape-rendering="crispEdges" fill="none">
        <path d=${symbolPath} stroke="#000080"/>
        <path d=${wirePath} stroke="#0000ff"/>
      </g>
      ${sources.map(([x, y]) => svg`<circle cx=${x + 0.5} cy=${y + 0.5} r="9.500" fill="none" stroke="#000080"/>`)}
      ${nodes.map(([x, y]) => svg`<rect x=${x - 1} y=${y - 1} width="3" height="3" fill="#00f"/>`)}
      ${labels.map(([x, y, s]) => svg`<text class="net" x=${x} y=${y}>${s}</text>`)}
    </svg>`;
  }

  render() {
    const tab = (name: string, icon: unknown) => html`<button role="tab" aria-selected=${this.tab === name}
      class=${classMap({ tab: true, on: this.tab === name })} @click=${() => (this.tab = name)}>${icon}<span>${name}</span></button>`;
    return html`
      <header class="head">
        <h1>LTspice IV - amp_16W.asc</h1>
        <div class="wm">
          <button aria-label="Minimize"><svg width="20" height="20"><path d="M5 12.500h8" stroke="#222"/></svg></button>
          <button aria-label="Restore"><svg width="20" height="20"><path d="M5.500 7.500h7v7h-7z" fill="none" stroke="#222"/><path d="M7 5.500h7.500V13" fill="none" stroke="#888"/></svg></button>
          <button aria-label="Close"><svg width="20" height="20"><circle cx="10" cy="10" r="9" fill="#1f9ede"/><path d="M7 7l6 6M13 7l-6 6" stroke="#fff" stroke-width="2.500"/></svg></button>
        </div>
      </header>
      <nav class="menu">
        ${this.menuItem("File")}${this.menuItem("Edit")}
        <button class="gapped">H<u>i</u>erarchy</button>
        ${this.menuItem("View")}${this.menuItem("Simulate", true)}${this.menuItem("Tools")}${this.menuItem("Window")}${this.menuItem("Help")}
      </nav>
      <div class="tools" role="toolbar">
        <i class="grip"></i>
        ${toolGroups.map((g) => html`<div class="group">${g.map((n) => html`<button class="tool" aria-label=${n}>
          <svg viewBox="0 0 17 17">${this.toolIcon(n)}</svg></button>`)}</div>`)}
        <i class="end"></i>
      </div>
      <div class="tabs" role="tablist">${tab("amp_16W.asc", transistorIcon)}${tab("amp_16W.raw", waveIcon)}</div>
      <div class="strip"></div>
      <main class="mdi">
        <section class="win">${this.caption("amp_16W.raw", waveIcon, false)}<div class="view dark">${this.plot()}</div></section>
        <section class="win">${this.caption("amp_16W.asc", transistorIcon, true)}<div class="view grey">${this.schematic()}</div></section>
      </main>
      <div class="status"><span>x = 0.944s</span><span>y = 21.12V</span><span class="right">Alternate</span></div>
      <footer class="bar">
        <button class="start" aria-label="Menu"><svg width="42" height="41"><circle cx="21" cy="21" r="14.500" fill="none" stroke="#e8e8e8" stroke-width="2.500"/>
          <path d="M14 13v11q0 4 4 4h7q4 0 4-4v-5q0-3-2.500-3T24 19v4M24 19q0-3-2.500-3T19 19v4" fill="none" stroke="#e8e8e8" stroke-width="2.500"/></svg></button>
        <i class="rule"></i>
        ${apps.map((a) => html`<button class=${classMap({ app: true, open: !!a.open, active: !!a.active })} aria-label=${a.name}>
          <svg viewBox="1 0 38 39">${a.art}</svg></button>`)}
        <div class="tray">
          ${trayLeft.map((t) => html`<button class="icon ${t.cls}" aria-label=${t.name}><svg viewBox="0 0 24 24">${t.art}</svg></button>`)}
          <span class="count">11</span>
          ${trayRight.map((t) => html`<button class="icon" aria-label=${t.name}><svg viewBox="0 0 24 24">${t.art}</svg></button>`)}
          <time class="clock">22:26</time>
          <button class="peek" aria-label="Show desktop"></button>
        </div>
      </footer>`;
  }
}
